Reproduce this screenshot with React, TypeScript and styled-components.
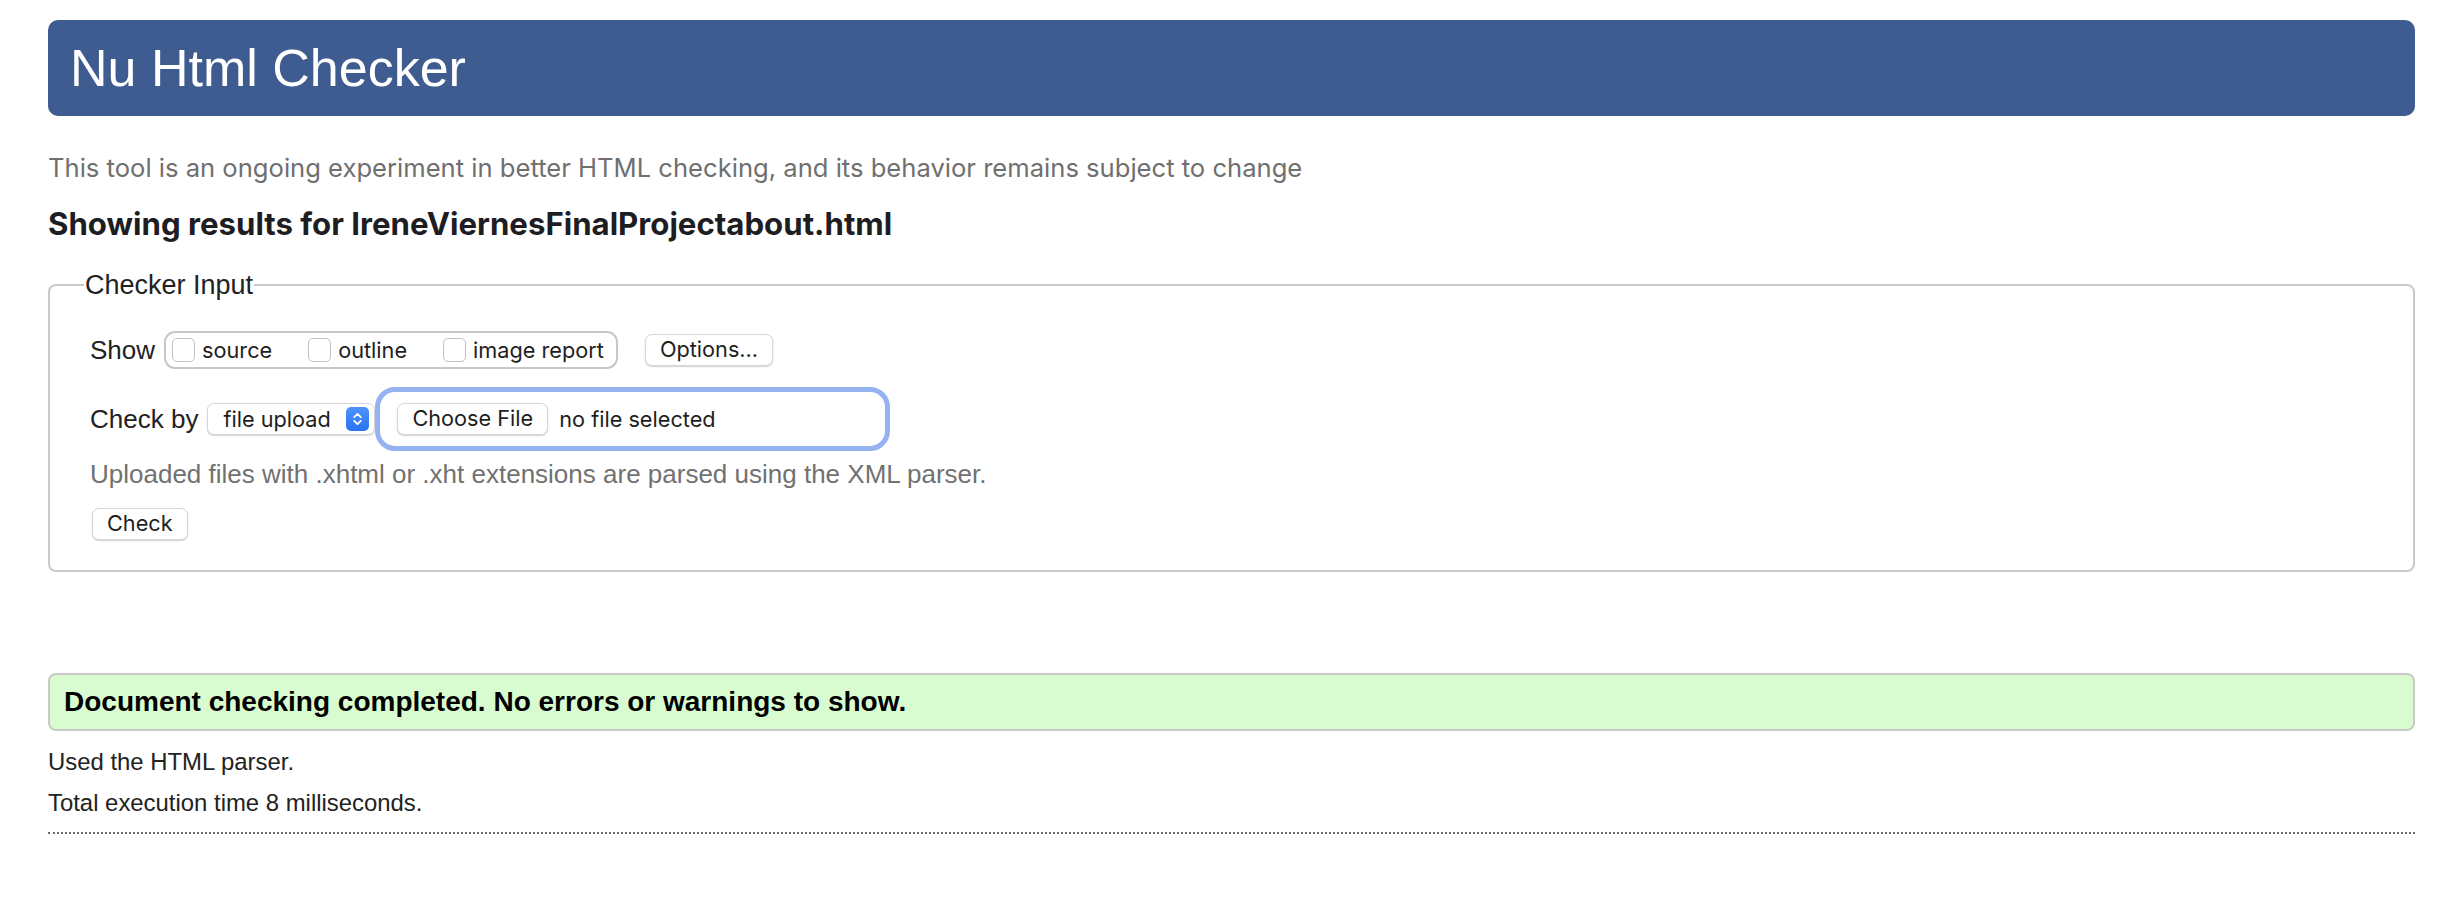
import styled, { createGlobalStyle } from 'styled-components'

const GlobalStyle = createGlobalStyle`
  html, body {
    margin: 0;
    padding: 0;
    background: #fff;
  }
  body {
    font-family: "Liberation Sans", Arial, sans-serif;
    font-size: 26px;
    color: #222;
  }
`

const checks = ['source', 'outline', 'image report']

export default function App() {
  return (
    <>
      <GlobalStyle />
      <Page>
        <Banner>
          <Title>Nu Html Checker</Title>
        </Banner>
        <Intro>
          This tool is an ongoing experiment in better HTML checking, and its behavior remains subject to change
        </Intro>
        <ResultsTitle>Showing results for IreneViernesFinalProjectabout.html</ResultsTitle>

        <InputSet>
          <Legend>Checker Input</Legend>
          <ControlRow $space={0}>
            <FieldLabel>Show</FieldLabel>
            <CheckGroup>
              {checks.map((c) => (
                <CheckItem key={c}>
                  <CheckBox />
                  {c}
                </CheckItem>
              ))}
            </CheckGroup>
            <PushButton $gap={27}>Options…</PushButton>
          </ControlRow>

          <ControlRow $space={18}>
            <FieldLabel>Check by</FieldLabel>
            <SelectBox>
              file upload
              <svg width="23" height="24" viewBox="0 0 23 24">
                <defs>
                  <linearGradient id="stepper" x1="0" y1="0" x2="0" y2="1">
                    <stop offset="0" stopColor="#4d93f8" />
                    <stop offset="1" stopColor="#2a72f1" />
                  </linearGradient>
                </defs>
                <rect x="0" y="0" width="23" height="24" rx="5" fill="url(#stepper)" />
                <path d="M8.2 10.2 L11.5 6.9 L14.8 10.2" fill="none" stroke="#fff" strokeWidth="1.8" strokeLinecap="round" strokeLinejoin="round" />
                <path d="M8.2 13.8 L11.5 17.1 L14.8 13.8" fill="none" stroke="#fff" strokeWidth="1.8" strokeLinecap="round" strokeLinejoin="round" />
              </svg>
            </SelectBox>
            <FileRing>
              <PushButton $gap={0}>Choose File</PushButton>
              <FileName>no file selected</FileName>
            </FileRing>
          </ControlRow>

          <Hint>Uploaded files with .xhtml or .xht extensions are parsed using the XML parser.</Hint>

          <ControlRow $space={19}>
            <PushButton $gap={2}>Check</PushButton>
          </ControlRow>
        </InputSet>

        <Success>Document checking completed. No errors or warnings to show.</Success>
        <Info $space={17}>Used the HTML parser.</Info>
        <Info $space={14}>Total execution time 8 milliseconds.</Info>
        <DottedRule />
      </Page>
    </>
  )
}

const Page = styled.main`
  padding: 20px 27px 40px 48px;
`
const Banner = styled.header`
  height: 96px;
  display: flex;
  align-items: center;
  padding: 0 22px;
  background: #3e5c8f;
  border-radius: 10px;
`
const Title = styled.h1`
  margin: 0;
  font-family: "Liberation Sans", Arial, sans-serif;
  font-weight: 400;
  font-size: 52px;
  line-height: 58px;
  color: #fff;
`
const Intro = styled.p`
  margin: 37px 0 0;
  font-family: Inter, sans-serif;
  font-size: 25.6px;
  line-height: 30px;
  color: #6f6f6f;
`
const ResultsTitle = styled.h2`
  margin: 24px 0 0;
  font-family: Inter, sans-serif;
  font-weight: 700;
  font-size: 31.2px;
  line-height: 34px;
  color: #1d1d22;
`
const InputSet = styled.fieldset`
  margin: 29px 0 0;
  padding: 31px 0 30px 40px;
  border: 2px solid #c9c9c9;
  border-radius: 8px;
  min-width: 0;
`
const Legend = styled.legend`
  margin-left: -6px;
  padding: 0 1px;
  font-size: 27px;
  line-height: 30px;
  color: #222;
`
const ControlRow = styled.div<{ $space: number }>`
  display: flex;
  align-items: center;
  margin-top: ${(p) => p.$space}px;
`
const FieldLabel = styled.span`
  margin-right: 9px;
  line-height: 30px;
`
const CheckGroup = styled.div`
  display: flex;
  align-items: center;
  box-sizing: border-box;
  height: 38px;
  padding: 0 12px 0 6px;
  border: 2px solid #c7c7c7;
  border-radius: 11px;
`
const CheckItem = styled.label`
  display: flex;
  align-items: center;
  gap: 7px;
  font-family: Inter, sans-serif;
  font-size: 21.7px;
  color: #1e1e1e;
  & + & {
    margin-left: 36px;
  }
`
const CheckBox = styled.span`
  box-sizing: border-box;
  width: 23px;
  height: 24px;
  border: 1.5px solid #c2c2c2;
  border-radius: 5px;
  background: #fff;
`
const PushButton = styled.button<{ $gap: number }>`
  box-sizing: border-box;
  height: 32px;
  margin-left: ${(p) => p.$gap}px;
  padding: 0 14px;
  font-family: Inter, sans-serif;
  font-size: 21.7px;
  line-height: 1;
  color: #1e1e1e;
  background: #fff;
  border: 1px solid #d6d6d6;
  border-radius: 7px;
  box-shadow: 0 1px 1.5px rgba(0, 0, 0, 0.18);
`
const SelectBox = styled.div`
  box-sizing: border-box;
  width: 168px;
  height: 32px;
  display: flex;
  align-items: center;
  justify-content: space-between;
  padding: 0 5px 0 15px;
  font-family: Inter, sans-serif;
  font-size: 21.7px;
  color: #1e1e1e;
  background: #fff;
  border: 1px solid #d6d6d6;
  border-radius: 7px;
  box-shadow: 0 1px 1.5px rgba(0, 0, 0, 0.18);
`
const FileRing = styled.div`
  box-sizing: border-box;
  width: 515px;
  height: 64px;
  display: flex;
  align-items: center;
  gap: 11px;
  padding-left: 17px;
  border: 5px solid #95b2f1;
  border-radius: 20px;
`
const FileName = styled.span`
  font-family: Inter, sans-serif;
  font-size: 21.7px;
  color: #1e1e1e;
`
const Hint = styled.p`
  margin: 8px 0 0;
  line-height: 30px;
  color: #717171;
`
const Success = styled.div`
  margin-top: 101px;
  padding: 11px 14px;
  background: #d8fcd0;
  border: 2px solid #c9c9c9;
  border-radius: 8px;
  font-weight: 700;
  font-size: 28px;
  line-height: 32px;
  color: #000;
`
const Info = styled.p<{ $space: number }>`
  margin: ${(p) => p.$space}px 0 0;
  font-size: 23.9px;
  line-height: 27px;
  color: #222;
`
const DottedRule = styled.hr`
  margin: 16px 0 0;
  border: 0;
  border-top: 2px dotted #6b6b6b;
`
